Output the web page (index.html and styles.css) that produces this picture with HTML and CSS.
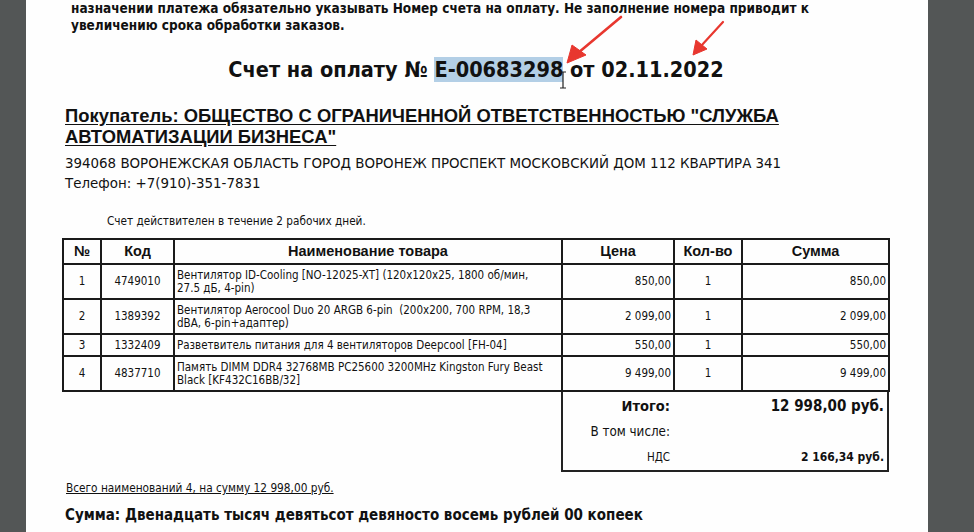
FILE: index.html
```html
<!DOCTYPE html>
<html lang="ru">
<head>
<meta charset="utf-8">
<title>Счет на оплату</title>
<link rel="stylesheet" href="styles.css">
</head>
<body>
<div class="viewer">
  <div class="gutter"></div>
  <div class="page">
    <p class="notice">назначении платежа обязательно указывать Номер счета на оплату. Не заполнение номера приводит к<br>увеличению срока обработки заказов.</p>
    <h1 class="title">Счет на оплату № <span class="sel">E-00683298</span> от 02.11.2022</h1>
    <h2 class="buyer">Покупатель: ОБЩЕСТВО С ОГРАНИЧЕННОЙ ОТВЕТСТВЕННОСТЬЮ "СЛУЖБА <br>АВТОМАТИЗАЦИИ БИЗНЕСА"</h2>
    <p class="address">394068 ВОРОНЕЖСКАЯ ОБЛАСТЬ ГОРОД ВОРОНЕЖ ПРОСПЕКТ МОСКОВСКИЙ ДОМ 112 КВАРТИРА 341<br>Телефон: +7(910)-351-7831</p>
    <p class="valid">Счет действителен в течение 2 рабочих дней.</p>
    <table class="items">
      <colgroup>
        <col class="c-no"><col class="c-code"><col class="c-name"><col class="c-price"><col class="c-qty"><col class="c-sum">
      </colgroup>
      <thead>
        <tr class="r-head"><th>№</th><th>Код</th><th>Наименование товара</th><th>Цена</th><th>Кол-во</th><th>Сумма</th></tr>
      </thead>
      <tbody>
        <tr class="r-tall"><td class="ctr">1</td><td class="ctr">4749010</td><td class="name">Вентилятор ID-Cooling [NO-12025-XT] (120x120x25, 1800 об/мин,<br>27.5 дБ, 4-pin)</td><td class="num">850,00</td><td class="ctr">1</td><td class="num">850,00</td></tr>
        <tr class="r-tall"><td class="ctr">2</td><td class="ctr">1389392</td><td class="name">Вентилятор Aerocool Duo 20 ARGB 6-pin&nbsp; (200x200, 700 RPM, 18,3<br>dBA, 6-pin+адаптер)</td><td class="num">2 099,00</td><td class="ctr">1</td><td class="num">2 099,00</td></tr>
        <tr class="r-short"><td class="ctr">3</td><td class="ctr">1332409</td><td class="name">Разветвитель питания для 4 вентиляторов Deepcool [FH-04]</td><td class="num">550,00</td><td class="ctr">1</td><td class="num">550,00</td></tr>
        <tr class="r-tall"><td class="ctr">4</td><td class="ctr">4837710</td><td class="name">Память DIMM DDR4 32768MB PC25600 3200MHz Kingston Fury Beast<br>Black [KF432C16BB/32]</td><td class="num">9 499,00</td><td class="ctr">1</td><td class="num">9 499,00</td></tr>
      </tbody>
    </table>
    <div class="totals">
      <div class="t-label t-bold">Итого:</div><div class="t-value t-big">12 998,00 руб.</div>
      <div class="t-label">В том числе:</div><div class="t-value"></div>
      <div class="t-label t-small">НДС</div><div class="t-value t-vat">2 166,34 руб.</div>
    </div>
    <p class="count">Всего наименований 4, на сумму 12 998,00 руб.</p>
    <p class="words">Сумма: Двенадцать тысяч девятьсот девяносто восемь рублей 00 копеек</p>

    <svg class="marks" width="902" height="100" viewBox="0 0 902 100" aria-hidden="true">
      <g fill="#e8372f" stroke="#e8372f">
        <line x1="595" y1="17" x2="552" y2="53" stroke-width="2.6" stroke-linecap="round"/>
        <polygon points="541,63 546,45 560,55" stroke-width="1" stroke-linejoin="round"/>
        <line x1="697" y1="22" x2="675" y2="46" stroke-width="2.2" stroke-linecap="round"/>
        <polygon points="667,55 670,40 681,49" stroke-width="1" stroke-linejoin="round"/>
      </g>
      <path d="M531 72 H537 M534 72 V88 M531 88 H537" stroke="#222" stroke-width="1.2" fill="none" transform="translate(3 0)"/>
    </svg>
  </div>
  <div class="gutter gutter-right"></div>
</div>
</body>
</html>
```
FILE: styles.css
```css
html, body {
  margin: 0;
  padding: 0;
}
body {
  background: #545757;
  width: 974px;
  height: 532px;
  overflow: hidden;
  color: #111;
  font-family: "DejaVu Sans Condensed", "DejaVu Sans", sans-serif;
  font-stretch: condensed;
}
.viewer {
  display: flex;
  height: 532px;
}
.gutter {
  width: 26px;
  flex: none;
  background: #535656;
}
.gutter-right {
  flex: 1;
}
.page {
  position: relative;
  width: 866px;
  flex: none;
  background: #fefefe;
  padding-left: 36px;
  overflow: hidden;
}
p, h1, h2 {
  margin: 0;
}
.notice {
  margin-left: 9px;
  font-weight: bold;
  font-size: 13.5px;
  line-height: 17px;
}
.title {
  margin-top: 22px;
  margin-left: -36px;
  width: 900px;
  font-size: 21.5px;
  line-height: 28px;
  font-weight: bold;
  text-align: center;
}
.sel {
  background: #b3cfe6;
}
.buyer {
  margin-top: 21px;
  margin-left: 3px;
  font-family: "Liberation Sans", Arial, sans-serif;
  font-stretch: normal;
  font-size: 18.4px;
  line-height: 21px;
  font-weight: bold;
  text-decoration: underline;
  text-underline-offset: 2px;
}
.address {
  margin-top: 6px;
  margin-left: 3px;
  font-size: 14.9px;
  line-height: 20px;
}
.valid {
  margin-top: 21px;
  margin-left: 45px;
  font-size: 11.7px;
  line-height: 14px;
}
.items {
  margin-top: 10px;
  border-collapse: collapse;
  table-layout: fixed;
  width: 826px;
  border: 2px solid #222;
}
.items th, .items td {
  border: 2px solid #1a1a1a;
  padding: 0 2px;
  font-size: 11.5px;
  line-height: 13px;
  vertical-align: middle;
}
.items th {
  font-family: "Liberation Sans", Arial, sans-serif;
  font-stretch: normal;
  font-size: 14.5px;
  font-weight: bold;
  text-align: center;
}
.c-no { width: 38px; }
.c-code { width: 73px; }
.c-name { width: 388px; }
.c-price { width: 112px; }
.c-qty { width: 68px; }
.c-sum { width: 147px; }
.r-head { height: 25px; }
.r-tall { height: 35px; }
.r-short { height: 22px; }
.ctr { text-align: center; }
.num { text-align: right; }
.items td.name { padding-left: 2px; text-align: left; }
.totals {
  margin-left: 499px;
  width: 324px;
  border: 2px solid #222;
  border-top: none;
  display: grid;
  grid-template-columns: 110px 1fr;
  grid-auto-rows: 26px;
  align-items: center;
}
.t-label, .t-value {
  text-align: right;
  padding-right: 3px;
  font-size: 13.3px;
}
.t-bold {
  font-weight: bold;
  font-size: 14.5px;
  padding-top: 2px;
}
.t-big {
  font-weight: bold;
  font-size: 15px;
  padding-top: 2px;
}
.t-small {
  font-size: 11.5px;
}
.t-vat {
  font-weight: bold;
  font-size: 12px;
}
.count {
  margin-top: 9px;
  margin-left: 4px;
  font-size: 11.75px;
  line-height: 14px;
  text-decoration: underline;
}
.words {
  margin-top: 10px;
  margin-left: 3px;
  font-size: 15px;
  line-height: 20px;
  font-weight: bold;
}
.marks {
  position: absolute;
  left: 0;
  top: 0;
  pointer-events: none;
}
```
